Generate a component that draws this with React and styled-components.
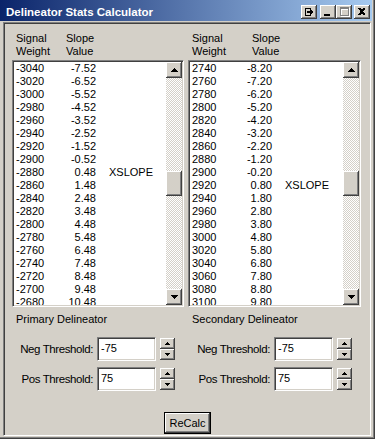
import React from 'react';
import styled, { createGlobalStyle } from 'styled-components';

const GlobalStyle = createGlobalStyle`
  html, body {
    margin: 0;
    padding: 0;
    background: #D4D0C8;
  }
  body {
    font-family: "Liberation Sans", Arial, sans-serif;
    font-size: 11px;
    color: #000;
  }
`;

const raised = `
  background: #D4D0C8;
  box-shadow: inset -1px -1px #404040, inset 1px 1px #FFFFFF,
    inset -2px -2px #808080, inset 2px 2px #D4D0C8;
`;

const sunken = `
  border: 1px solid;
  border-color: #808080 #FFFFFF #FFFFFF #808080;
  box-shadow: inset 1px 1px #404040, inset -1px -1px #D4D0C8;
`;

const left = [];
for (let i = 0; i < 19; i++) {
  left.push({ w: -3040 + i * 20, s: (-7.52 + i).toFixed(2), x: i === 8 });
}
const right = [];
for (let i = 0; i < 19; i++) {
  right.push({ w: 2740 + i * 20, s: (-8.2 + i).toFixed(2), x: i === 9 });
}

function Arrow({ down, w = 7, h = 4 }) {
  const pts = down ? `0,0 ${w},0 ${w / 2},${h}` : `0,${h} ${w},${h} ${w / 2},0`;
  return (
    <svg width={w} height={h} viewBox={`0 0 ${w} ${h}`} shapeRendering="crispEdges">
      <polygon points={pts} fill="#000" />
    </svg>
  );
}

function ListBox({ rows }) {
  return (
    <StyledListBox>
      <List>
        {rows.map((r) => (
          <Row key={r.w}>
            <span>{r.w}</span>
            <Value>{r.s}</Value>
            <Flag>{r.x ? 'XSLOPE' : ''}</Flag>
          </Row>
        ))}
      </List>
      <ScrollBar>
        <ScrollButton><Arrow /></ScrollButton>
        <Track>
          <Thumb offset={93} />
        </Track>
        <ScrollButton><Arrow down /></ScrollButton>
      </ScrollBar>
    </StyledListBox>
  );
}

function Field({ label, value, labelWidth }) {
  return (
    <FieldRow labelWidth={labelWidth}>
      <FieldLabel>{label}</FieldLabel>
      <TextBox>{value}</TextBox>
      <Spinner>
        <SpinButton><Arrow w={5} h={3} /></SpinButton>
        <SpinButton><Arrow down w={5} h={3} /></SpinButton>
      </Spinner>
    </FieldRow>
  );
}

function Pane({ title, rows, slopeAt, labelWidth }) {
  return (
    <StyledPane>
      <Header slopeAt={slopeAt}>
        <span>Signal<br />Weight</span>
        <span>Slope<br />Value</span>
      </Header>
      <ListBox rows={rows} />
      <GroupLabel>{title}</GroupLabel>
      <Fields>
        <Field label="Neg Threshold:" value="-75" labelWidth={labelWidth} />
        <Field label="Pos Threshold:" value="75" labelWidth={labelWidth} />
      </Fields>
    </StyledPane>
  );
}

function App() {
  return (
    <>
      <GlobalStyle />
      <Window>
        <TitleBar>
          <Title>Delineator Stats Calculator</Title>
          <Controls>
            <CaptionButton>
              <svg width="16" height="14" viewBox="0 0 16 14" shapeRendering="crispEdges">
                <path d="M4 3h6v1h-5v6h5v1h-6z" fill="#000" />
                <path d="M6 6h3v-2l3 3-3 3v-2h-3z" fill="#000" />
              </svg>
            </CaptionButton>
            <Gap />
            <CaptionButton>
              <svg width="16" height="14" viewBox="0 0 16 14" shapeRendering="crispEdges">
                <rect x="4" y="9" width="6" height="2" fill="#000" />
              </svg>
            </CaptionButton>
            <CaptionButton>
              <svg width="16" height="14" viewBox="0 0 16 14" shapeRendering="crispEdges">
                <path d="M4 2h9v9h-9z M5 4v6h7v-6z" fill="#FFFFFF" transform="translate(1 1)" />
                <path d="M4 2h9v9h-9z M5 4v6h7v-6z" fill="#808080" fillRule="evenodd" />
              </svg>
            </CaptionButton>
            <CloseGap />
            <CaptionButton>
              <svg width="16" height="14" viewBox="0 0 16 14" shapeRendering="crispEdges">
                <path d="M4 3h2l1 1h1l1-1h2v1l-2 2v1l2 2v1h-2l-1-1h-1l-1 1h-2v-1l2-2v-1l-2-2z" fill="#000" />
              </svg>
            </CaptionButton>
          </Controls>
        </TitleBar>
        <Client>
          <Panes>
            <Pane title="Primary Delineator" rows={left} slopeAt={50} labelWidth={81} />
            <Pane title="Secondary Delineator" rows={right} slopeAt={60} labelWidth={82} />
          </Panes>
          <ButtonRow>
            <DefaultButton>ReCalc</DefaultButton>
          </ButtonRow>
        </Client>
      </Window>
    </>
  );
}

export default App;

const Window = styled.div`
  width: 375px;
  height: 439px;
  box-sizing: border-box;
  display: flex;
  flex-direction: column;
  background: #D4D0C8;
  box-shadow: inset -1px -1px #404040, inset -2px -2px #808080;
`;

const TitleBar = styled.div`
  height: 21px;
  margin-right: 3px;
  box-sizing: border-box;
  padding: 3px 2px 0 6px;
  display: flex;
  align-items: center;
  justify-content: space-between;
  background: linear-gradient(to right, #0A246A, #A6CAF0);
`;

const Title = styled.span`
  color: #FFFFFF;
  font-weight: bold;
  font-size: 11.5px;
`;

const Controls = styled.div`
  display: flex;
  align-items: center;
`;

const Gap = styled.span`
  width: 3px;
`;

const CloseGap = styled.span`
  width: 2px;
`;

const CaptionButton = styled.div`
  width: 16px;
  height: 14px;
  display: flex;
  ${raised}
  svg {
    display: block;
  }
`;

const Client = styled.div`
  flex: 1;
  margin: 1px 4px 3px 3px;
  padding: 9px 7px 1px 8px;
  display: flex;
  flex-direction: column;
  ${sunken}
`;

const Panes = styled.div`
  display: grid;
  grid-template-columns: 172px 173px;
  column-gap: 4px;
`;

const StyledPane = styled.div`
  display: flex;
  flex-direction: column;
`;

const Header = styled.div`
  display: grid;
  grid-template-columns: ${(p) => p.slopeAt}px auto;
  padding-left: 4px;
  line-height: 13px;
  height: 26px;
`;

const StyledListBox = styled.div`
  margin-top: 2px;
  height: 247px;
  box-sizing: border-box;
  padding: 1px;
  display: flex;
  background: #FFFFFF;
  ${sunken}
`;

const List = styled.div`
  flex: 1;
  overflow: hidden;
  padding-left: 2px;
`;

const Row = styled.div`
  display: grid;
  grid-template-columns: 48px 32px auto;
  height: 13px;
  line-height: 13px;
  white-space: nowrap;
`;

const Value = styled.span`
  text-align: right;
`;

const Flag = styled.span`
  margin-left: 13px;
`;

const ScrollBar = styled.div`
  width: 16px;
  display: flex;
  flex-direction: column;
`;

const ScrollButton = styled.div`
  width: 16px;
  height: 16px;
  display: flex;
  align-items: center;
  justify-content: center;
  ${raised}
`;

const Track = styled.div`
  flex: 1;
  display: flex;
  flex-direction: column;
  background: repeating-conic-gradient(#D4D0C8 0 25%, #FFFFFF 0 50%) 0 0 / 2px 2px;
`;

const Thumb = styled.div`
  margin-top: ${(p) => p.offset}px;
  height: 25px;
  ${raised}
`;

const GroupLabel = styled.div`
  margin-top: 6px;
  padding-left: 4px;
  line-height: 13px;
`;

const Fields = styled.div`
  margin-top: 11px;
  display: flex;
  flex-direction: column;
  gap: 6px;
`;

const FieldRow = styled.div`
  display: grid;
  grid-template-columns: ${(p) => p.labelWidth}px 59px 16px;
  column-gap: 4px;
  align-items: center;
  height: 24px;
`;

const FieldLabel = styled.span`
  text-align: right;
  white-space: nowrap;
  font-size: 11.5px;
  letter-spacing: -0.4px;
`;

const TextBox = styled.div`
  height: 24px;
  box-sizing: border-box;
  padding: 4px 3px;
  line-height: 13px;
  background: #FFFFFF;
  ${sunken}
`;

const Spinner = styled.div`
  display: flex;
  flex-direction: column;
  align-self: start;
  margin-top: 1px;
`;

const SpinButton = styled.div`
  width: 15px;
  height: 11px;
  display: flex;
  align-items: center;
  justify-content: center;
  ${raised}
`;

const ButtonRow = styled.div`
  margin-top: auto;
  display: flex;
  justify-content: center;
`;

const DefaultButton = styled.div`
  width: 47px;
  height: 22px;
  box-sizing: border-box;
  border: 1px solid #000;
  display: flex;
  align-items: center;
  justify-content: center;
  line-height: 13px;
  ${raised}
`;
